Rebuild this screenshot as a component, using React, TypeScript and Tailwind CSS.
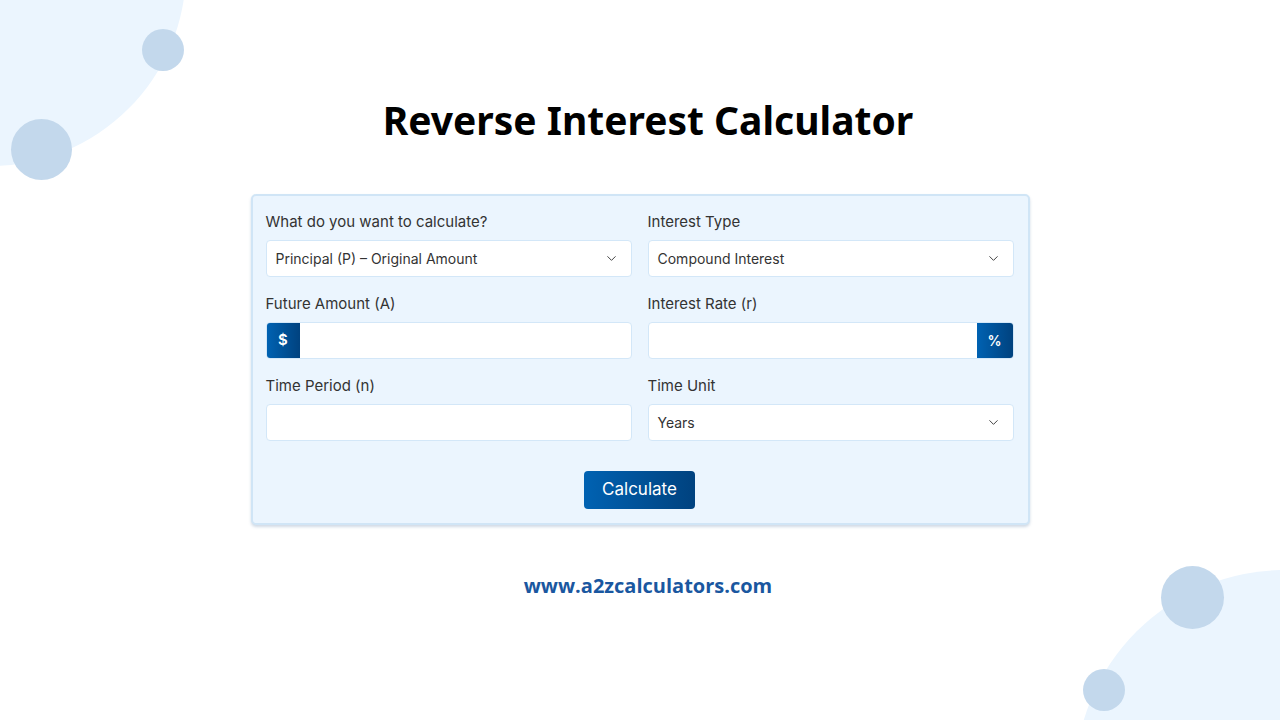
import { ChevronDown } from "lucide-react";

function Label({ children }: { children: React.ReactNode }) {
  return <div className="h-5 mb-[8px] mt-[1px] text-[15px] leading-5 text-[#333333]">{children}</div>;
}

function SelectBox({ value }: { value: string }) {
  return (
    <div className="h-[37px] flex items-center justify-between bg-white border border-[#d3e7f8] rounded-[4px] pl-[9px] pr-[12px] text-[14px] text-[#333333]">
      <span className="-mt-px">{value}</span>
      <ChevronDown size={15} strokeWidth={1.6} className="text-[#444444]" />
    </div>
  );
}

export default function App() {
  const font = { fontFamily: "Inter, 'Noto Sans', sans-serif" };

  return (
    <div className="relative w-[1280px] h-[720px] overflow-hidden bg-white" style={font}>
      {/* background decoration */}
      <div className="absolute left-[-206px] top-[-226px] w-[392px] h-[392px] rounded-full bg-[#ebf5fe]" />
      <div className="absolute left-[142px] top-[29px] w-[42px] h-[42px] rounded-full bg-[#c3d8ec]" />
      <div className="absolute left-[11px] top-[119px] w-[61px] h-[61px] rounded-full bg-[#c3d8ec]" />
      <div className="absolute left-[1075px] top-[570px] w-[420px] h-[420px] rounded-full bg-[#ebf5fe]" />
      <div className="absolute left-[1161px] top-[566px] w-[63px] h-[63px] rounded-full bg-[#c3d8ec]" />
      <div className="absolute left-[1083px] top-[669px] w-[42px] h-[42px] rounded-full bg-[#c3d8ec]" />

      <div className="relative flex flex-col items-center">
        <h1
          className="mt-[94px] ml-4 h-[52px] text-[39px] leading-[52px] font-bold text-black"
          style={{ fontFamily: "'Noto Sans', sans-serif" }}
        >
          Reverse Interest Calculator
        </h1>

        <div className="mt-[48px] w-[779px] bg-[#ebf5fe] border-2 border-[#d0e5f6] rounded-[5px] shadow-[0_2px_3px_rgba(120,150,180,0.35)] pl-[13px] pr-[14px] pt-[15px] pb-[14px]">
          <div className="grid grid-cols-2 gap-x-4 gap-y-4">
            <div>
              <Label>What do you want to calculate?</Label>
              <SelectBox value="Principal (P) – Original Amount" />
            </div>
            <div>
              <Label>Interest Type</Label>
              <SelectBox value="Compound Interest" />
            </div>
            <div>
              <Label>Future Amount (A)</Label>
              <div className="h-[37px] flex bg-white border border-[#d3e7f8] rounded-[4px] overflow-hidden">
                <div className="w-[33px] flex items-center justify-center bg-gradient-to-r from-[#0062b2] to-[#00427f] text-white text-[15px] font-semibold">
                  $
                </div>
                <div className="flex-1" />
              </div>
            </div>
            <div>
              <Label>Interest Rate (r)</Label>
              <div className="h-[37px] flex bg-white border border-[#d3e7f8] rounded-[4px] overflow-hidden">
                <div className="flex-1" />
                <div className="w-[36px] flex items-center justify-center bg-gradient-to-r from-[#0062b2] to-[#00427f] text-white text-[14px] font-semibold">
                  %
                </div>
              </div>
            </div>
            <div>
              <Label>Time Period (n)</Label>
              <div className="h-[37px] bg-white border border-[#d3e7f8] rounded-[4px]" />
            </div>
            <div>
              <Label>Time Unit</Label>
              <SelectBox value="Years" />
            </div>
          </div>

          <div className="flex justify-center mt-[30px]">
            <button className="w-[111px] h-[38px] rounded-[4px] bg-gradient-to-r from-[#0062b2] to-[#00427f] text-white text-[17px]">
              Calculate
            </button>
          </div>
        </div>

        <div
          className="mt-[46px] ml-4 text-[20px] font-bold text-[#1a57a0]"
          style={{ fontFamily: "'Open Sans', sans-serif" }}
        >
          www.a2zcalculators.com
        </div>
      </div>
    </div>
  );
}
